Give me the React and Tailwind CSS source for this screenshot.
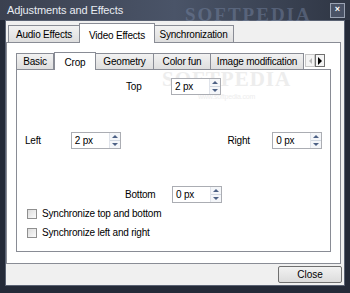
import React, { useState } from "react";

const font = { fontFamily: '"Liberation Sans", Arial, sans-serif' };

function Spin({ value }) {
  return (
    <div className="flex h-[17px] w-[50px] border border-[#abadb3] bg-white">
      <div className="flex-1 pl-[3px] text-[10px] leading-[15px] text-black">{value}</div>
      <div className="flex w-[11px] flex-col border-l border-[#dfe3ea] bg-[#f4f6f9]">
        <div className="flex flex-1 items-center justify-center border-b border-[#cfd6e0]">
          <span className="h-0 w-0 border-x-[3px] border-b-[3px] border-x-transparent border-b-[#4d6185]" />
        </div>
        <div className="flex flex-1 items-center justify-center">
          <span className="h-0 w-0 border-x-[3px] border-t-[3px] border-x-transparent border-t-[#4d6185]" />
        </div>
      </div>
    </div>
  );
}

function Check({ label }) {
  return (
    <label className="flex items-center gap-[5px] whitespace-nowrap text-[10px] tracking-[-0.2px] text-black">
      <span className="h-[10px] w-[10px] border border-[#8f8f8f] bg-gradient-to-br from-[#dcdcdc] to-[#fbfbfb]" />
      {label}
    </label>
  );
}

export default function App() {
  const [outer] = useState("Video Effects");
  const [inner] = useState("Crop");
  const outerTabs = [
    { name: "Audio Effects", w: "w-[72px]" },
    { name: "Video Effects", w: "w-[76px]" },
    { name: "Synchronization", w: "w-[80px]" },
  ];
  const innerTabs = [
    { name: "Basic", w: "w-[38px]" },
    { name: "Crop", w: "w-[42px]" },
    { name: "Geometry", w: "w-[58px]" },
    { name: "Color fun", w: "w-[57px]" },
    { name: "Image modification", w: "w-[93px]" },
  ];

  return (
    <div style={font} className="flex h-[293px] w-[350px] flex-col overflow-hidden bg-[#242a38] select-none">
      {/* title bar */}
      <div className="relative flex h-[20px] items-center bg-gradient-to-r from-[#3b4150] via-[#4a5468] to-[#2f3644] pl-[7px] pr-[5px]">
        <span className="text-[11px] tracking-[-0.1px] text-[#e8ecf2]">Adjustments and Effects</span>
        <span className="absolute left-[185px] top-[1px] text-[19px] font-bold tracking-[2px] text-[#7f8fae] opacity-40" style={{ fontFamily: '"Liberation Serif", serif' }}>SOFTPEDIA</span>
        <div className="ml-auto flex h-[15px] w-[15px] items-center justify-center border border-[#9aa3b3] bg-[#4a5366] text-[9px] font-bold text-white">×</div>
      </div>

      {/* client area */}
      <div className="mx-[5px] flex flex-1 flex-col border border-[#5a6273] bg-[#f0f0f0]">
        {/* outer tabs */}
        <div className="flex h-[21px] items-end pl-[2px]">
          {outerTabs.map((t) =>
            t.name === outer ? (
              <div key={t.name} className={`${t.w} relative z-10 -mb-px -mx-[1px] flex h-[20px] items-start justify-center whitespace-nowrap border border-b-0 border-[#898c95] bg-white pt-[4px] text-[10px] tracking-[-0.2px]`}>
                {t.name}
              </div>
            ) : (
              <div key={t.name} className={`${t.w} flex h-[17px] items-center justify-center whitespace-nowrap border border-b-0 border-l-0 first:border-l border-[#898c95] bg-gradient-to-b from-[#f2f2f2] to-[#dedede] text-[10px] tracking-[-0.2px]`}>
                {t.name}
              </div>
            )
          )}
        </div>

        {/* outer pane */}
        <div className="mr-[3px] flex h-[222px] flex-col border border-[#898c95] bg-white px-[9px] pt-[9px]">
          {/* inner tabs */}
          <div className="flex h-[17px] items-end">
            {innerTabs.map((t) =>
              t.name === inner ? (
                <div key={t.name} className={`${t.w} relative z-10 -mb-px flex h-[18px] items-start justify-center whitespace-nowrap border border-b-0 border-[#898c95] bg-white pt-[2px] text-[10px] tracking-[-0.2px]`}>
                  {t.name}
                </div>
              ) : (
                <div key={t.name} className={`${t.w} flex h-[16px] items-center justify-center whitespace-nowrap border border-b-0 border-l-0 first:border-l border-[#898c95] bg-gradient-to-b from-[#f2f2f2] to-[#dedede] text-[10px] tracking-[-0.2px]`}>
                  {t.name}
                </div>
              )
            )}
            <div className="mb-[2px] ml-[1px] flex h-[13px] items-center">
              <div className="flex h-[13px] w-[10px] items-center justify-center border border-[#c8c8c8] bg-[#f4f4f4]">
                <span className="h-0 w-0 border-y-[3px] border-r-[3px] border-y-transparent border-r-[#b8b8b8]" />
              </div>
              <div className="flex h-[13px] w-[10px] items-center justify-center border border-[#707070] bg-[#f4f4f4]">
                <span className="h-0 w-0 border-y-[4px] border-l-[4px] border-y-transparent border-l-black" />
              </div>
            </div>
          </div>

          {/* inner pane */}
          <div className="relative flex h-[183px] flex-col border border-[#898c95] bg-white pl-[8px] pr-[8px] pt-[8px] text-[10px] tracking-[-0.2px]">
            <div className="pointer-events-none absolute left-[145px] top-[-6px] flex flex-col items-center text-[#ededed]">
              <span className="text-[21px] font-bold tracking-[1px]" style={{ fontFamily: '"Liberation Serif", serif' }}>SOFTPEDIA</span>
              <span className="-mt-[4px] text-[7px]">www.softpedia.com</span>
            </div>
            <div className="relative flex items-center">
              <span className="ml-[101px] w-[45px]">Top</span>
              <Spin value="2 px" />
            </div>
            <div className="relative mt-[37px] flex items-center">
              <span className="w-[46px]">Left</span>
              <Spin value="2 px" />
              <span className="ml-[107px] w-[45px]">Right</span>
              <Spin value="0 px" />
            </div>
            <div className="mt-[37px] flex items-center">
              <span className="ml-[100px] w-[47px]">Bottom</span>
              <Spin value="0 px" />
            </div>
            <div className="ml-[2px] mt-[3px] flex flex-col gap-[4px]">
              <Check label="Synchronize top and bottom" />
              <Check label="Synchronize left and right" />
            </div>
          </div>
        </div>

        {/* footer */}
        <div className="flex flex-1 items-center justify-end pr-[2px]">
          <button className="h-[17px] w-[64px] rounded-[2px] border border-[#707070] bg-gradient-to-b from-[#f2f2f2] to-[#dcdcdc] text-[10px] leading-[14px] text-black">
            Close
          </button>
        </div>
      </div>
      <div className="h-[7px]" />
    </div>
  );
}
